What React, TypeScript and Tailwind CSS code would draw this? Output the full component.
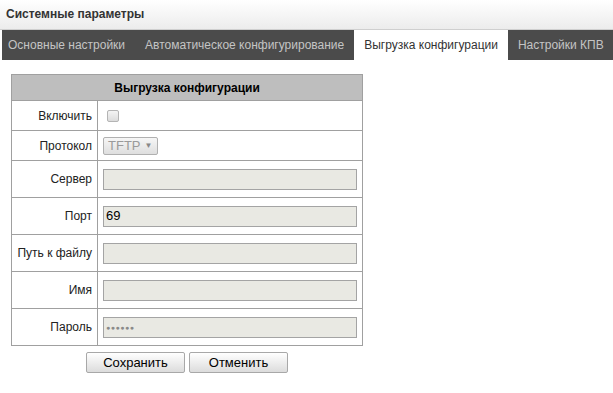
import React from "react";

const tabs = [
  { label: "Основные настройки", active: false },
  { label: "Автоматическое конфигурирование", active: false },
  { label: "Выгрузка конфигурации", active: true },
  { label: "Настройки КПВ", active: false },
];

function TextInput({ value, password }: { value?: string; password?: boolean }) {
  return (
    <div className="flex h-[21px] w-[254px] items-center border border-[#a4a4a4] bg-[#e9e9e3] px-[2px] text-[13px] text-black">
      {password ? <span className="text-[7px] leading-none tracking-[0.5px] text-[#8a8a8a]">●●●●●●</span> : value}
    </div>
  );
}

function Row({ label, tall = true, children }: { label: string; tall?: boolean; children: React.ReactNode }) {
  return (
    <tr className={tall ? "h-[37px]" : "h-[30px]"}>
      <td className="w-[86px] border border-[#a0a0a0] pr-[5px] text-right align-middle text-[12px] text-[#222]">{label}</td>
      <td className="border border-[#a0a0a0] pl-[5px] align-middle">{children}</td>
    </tr>
  );
}

export default function App() {
  return (
    <div className="min-h-[393px] w-[613px] overflow-hidden bg-white font-['Liberation_Sans',Arial,sans-serif]">
      {/* Title bar */}
      <div className="flex h-[30px] items-center border-b border-[#cfcfcf] bg-gradient-to-b from-white to-[#ececec] px-[6px] pb-[2px] text-[12px] font-bold text-[#333]">
        Системные параметры
      </div>

      {/* Tabs */}
      <div className="flex h-[30px] pl-[2px]">
        {tabs.map((t, i) => (
          <div
            key={t.label}
            className={
              (i === 0 ? "pl-[6px] pr-[10px] " : "px-[10px] ") +
              (t.active
                ? "flex shrink-0 items-center whitespace-nowrap bg-white text-[12px] text-[#333]"
                : "flex shrink-0 items-center whitespace-nowrap bg-[#4b4b4b] text-[12px] text-[#c4c4c4]")
            }
          >
            {t.label}
          </div>
        ))}
      </div>

      {/* Form */}
      <div className="ml-[11px] mt-[14px] w-[352px]">
        <table className="w-[352px] border-collapse">
          <tbody>
            <tr className="h-[26px]">
              <th colSpan={2} className="border border-[#a0a0a0] bg-[#bebebe] text-center text-[12px] font-bold text-black">
                Выгрузка конфигурации
              </th>
            </tr>
            <Row label="Включить" tall={false}>
              <div className="ml-[4px] h-[12px] w-[12px] rounded-[2px] border border-[#b4b4b4] bg-gradient-to-b from-[#f4f4f4] to-[#dcdcdc]" />
            </Row>
            <Row label="Протокол" tall={false}>
              <div className="flex h-[18px] w-[55px] items-center gap-[4px] rounded-[2px] border border-[#b0b0b0] bg-gradient-to-b from-[#f6f6f6] to-[#dedede] pl-[4px] text-[13px] text-[#9a9a9a]">
                TFTP
                <span className="text-[8px] text-[#888]">▼</span>
              </div>
            </Row>
            <Row label="Сервер">
              <TextInput />
            </Row>
            <Row label="Порт">
              <TextInput value="69" />
            </Row>
            <Row label="Путь к файлу">
              <TextInput />
            </Row>
            <Row label="Имя">
              <TextInput />
            </Row>
            <Row label="Пароль">
              <TextInput password />
            </Row>
          </tbody>
        </table>
        <div className="mt-[6px] flex justify-center gap-[4px]">
          <button className="h-[21px] w-[99px] rounded-[2px] border border-[#a8a8a8] bg-gradient-to-b from-white to-[#dcdcdc] text-[13px] text-black">
            Сохранить
          </button>
          <button className="h-[21px] w-[99px] rounded-[2px] border border-[#a8a8a8] bg-gradient-to-b from-white to-[#dcdcdc] text-[13px] text-black">
            Отменить
          </button>
        </div>
      </div>
    </div>
  );
}
